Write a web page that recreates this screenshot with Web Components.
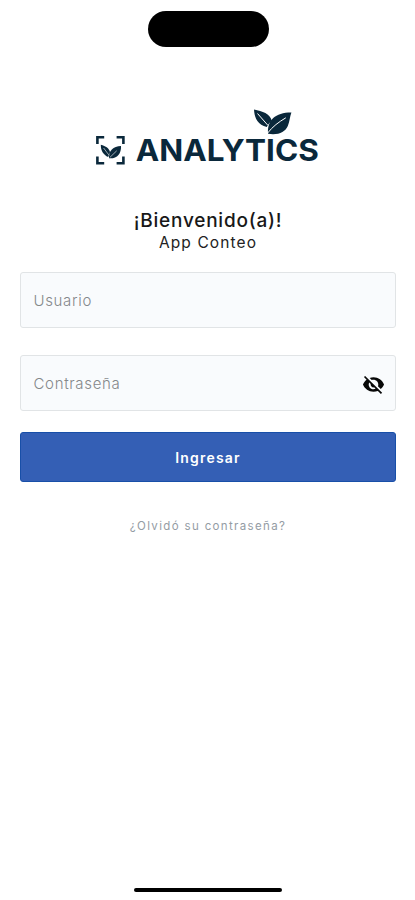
<!DOCTYPE html>
<html lang="es">
<head>
<meta charset="utf-8">
<meta name="viewport" content="width=device-width, initial-scale=1">
<title>Analytics</title>
<style>
  body {
    margin: 0;
    background: #fff;
    font-family: Inter, "Liberation Sans", sans-serif;
  }
</style>
</head>
<body>
<login-screen></login-screen>

<script>
class BrandLogo extends HTMLElement {
  constructor() {
    super()
    this.attachShadow({ mode: 'open' })
    this.shadowRoot.innerHTML = `
      <style>
        :host { display: block; height: 70px; }
        svg { display: block; }
        text { font: 700 29.5px Inter, sans-serif; }
      </style>
      <svg width="235" height="70" viewBox="91 105 235 70" fill="#0a283b">
        <path d="M97.4 144v-6.8h6.8M116.6 137.2h6.8v6.8M97.4 156.5v6.7h6.8M116.6 163.2h6.8v-6.7" fill="none" stroke="#0a283b" stroke-width="2.6"/>
        <path d="M100.8 144.8c5 1.3 8.6 3.8 9.2 7.4l-1.8 4.9c-4.6-2.1-7.5-6.2-7.4-12.3z"/>
        <path d="M121 146c.4 7.9-4.2 13-12 12.3-.8-7 4.3-12.2 12-12.3z"/>
        <path d="M103.6 148l5.6 7.4M109.7 157.6l7-6.8" fill="none" stroke="#fff" stroke-width=".6"/>
        <path d="M254 109.6c8.5 1.7 16 4.2 17.8 11.3-2.3 1.5-3.8 3.5-5 6.2-8.5-2.1-12.2-7.8-12.8-17.5z"/>
        <path d="M291.4 112.5c-1.6 4.2-1.6 8.8-3.6 13.4-2.6 6.2-9.8 9.5-19.7 7.8-1.1-13.6 7.3-21.3 23.3-21.2z"/>
        <path d="M257.5 113.5l10.2 11.6M267.3 133.4c5.6-7.1 11.2-11.2 18.5-15.6" fill="none" stroke="#fff" stroke-width="1"/>
        <text x="135.8" y="160.8" textLength="183" lengthAdjust="spacingAndGlyphs">ANALYTICS</text>
      </svg>
    `
  }
}

class FormField extends HTMLElement {
  constructor() {
    super()
    this.attachShadow({ mode: 'open' })
    this.shadowRoot.innerHTML = `
      <style>
        :host {
          display: flex;
          align-items: center;
          justify-content: space-between;
          box-sizing: border-box;
          height: 56px;
          padding: 2px 10px 0 12.5px;
          border: 1px solid #e1e4e6;
          border-radius: 3px;
          background: #f9fbfd;
          color: #85888b;
          font-size: 15px;
          font-weight: 300;
          line-height: 20px;
          letter-spacing: .67px;
        }
      </style>
      <slot></slot>
      <slot name="icon"></slot>
    `
  }
}

class EyeOffIcon extends HTMLElement {
  constructor() {
    super()
    this.attachShadow({ mode: 'open' })
    this.shadowRoot.innerHTML = `
      <style>
        :host { display: block; width: 23px; height: 23px; }
        svg { display: block; }
      </style>
      <svg width="23" height="23" viewBox="0 0 24 24" fill="#080808">
        <path d="M12 7c2.76 0 5 2.24 5 5 0 .65-.13 1.26-.36 1.83l2.92 2.92c1.51-1.26 2.7-2.89 3.43-4.75-1.73-4.39-6-7.5-11-7.5-1.4 0-2.74.25-3.98.7l2.16 2.16C10.74 7.13 11.35 7 12 7zM2 4.27l2.28 2.28.46.46C3.08 8.3 1.78 10.02 1 12c1.73 4.39 6 7.5 11 7.5 1.55 0 3.03-.3 4.38-.84l.42.42L19.73 22 21 20.73 3.27 3 2 4.27zM7.53 9.8l1.55 1.55c-.05.21-.08.43-.08.65 0 1.66 1.34 3 3 3 .22 0 .44-.03.65-.08l1.55 1.55c-.67.33-1.41.53-2.2.53-2.76 0-5-2.24-5-5 0-.79.2-1.53.53-2.2z"/>
      </svg>
    `
  }
}

class PrimaryButton extends HTMLElement {
  constructor() {
    super()
    this.attachShadow({ mode: 'open' })
    this.shadowRoot.innerHTML = `
      <style>
        :host { display: block; height: 50px; }
        button {
          display: block;
          width: 100%;
          height: 100%;
          padding: 0;
          border: 1px solid #184fa8;
          border-radius: 3px;
          background: #345fb5;
          color: #fff;
          font: 600 14px Inter, sans-serif;
          letter-spacing: 1.2px;
          cursor: pointer;
        }
      </style>
      <button type="button"><slot></slot></button>
    `
  }
}

class LoginScreen extends HTMLElement {
  constructor() {
    super()
    this.attachShadow({ mode: 'open' })
    this.shadowRoot.innerHTML = `
      <style>
        :host {
          display: flex;
          flex-direction: column;
          box-sizing: border-box;
          height: 900px;
          padding: 11px 19px 8px 20px;
        }
        .island {
          align-self: center;
          width: 121px;
          height: 36px;
          border-radius: 18px;
          background: #000;
        }
        brand-logo { align-self: center; margin-top: 58px; }
        h1, p { margin: 0; text-align: center; }
        h1 {
          margin-top: 33px;
          color: #181818;
          font-size: 19px;
          font-weight: 500;
          line-height: 26px;
          letter-spacing: .77px;
        }
        p {
          color: #222;
          font-size: 15.5px;
          font-weight: 400;
          line-height: 18px;
          letter-spacing: 1.1px;
        }
        .user { margin-top: 20px; }
        .password { margin-top: 27px; }
        primary-button { margin-top: 21px; }
        a {
          align-self: center;
          margin-top: 36px;
          color: #949ca4;
          font-size: 11.5px;
          line-height: 16px;
          letter-spacing: 1.35px;
        }
        .home {
          align-self: center;
          width: 148px;
          height: 4px;
          margin-top: auto;
          border-radius: 2px;
          background: #000;
        }
      </style>
      <div class="island"></div>
      <brand-logo></brand-logo>
      <h1>¡Bienvenido(a)!</h1>
      <p>App Conteo</p>
      <form-field class="user">Usuario</form-field>
      <form-field class="password">Contraseña<eye-off-icon slot="icon"></eye-off-icon></form-field>
      <primary-button>Ingresar</primary-button>
      <a>¿Olvidó su contraseña?</a>
      <div class="home"></div>
    `
  }
}

customElements.define('brand-logo', BrandLogo)
customElements.define('form-field', FormField)
customElements.define('eye-off-icon', EyeOffIcon)
customElements.define('primary-button', PrimaryButton)
customElements.define('login-screen', LoginScreen)
</script>
</body>
</html>
